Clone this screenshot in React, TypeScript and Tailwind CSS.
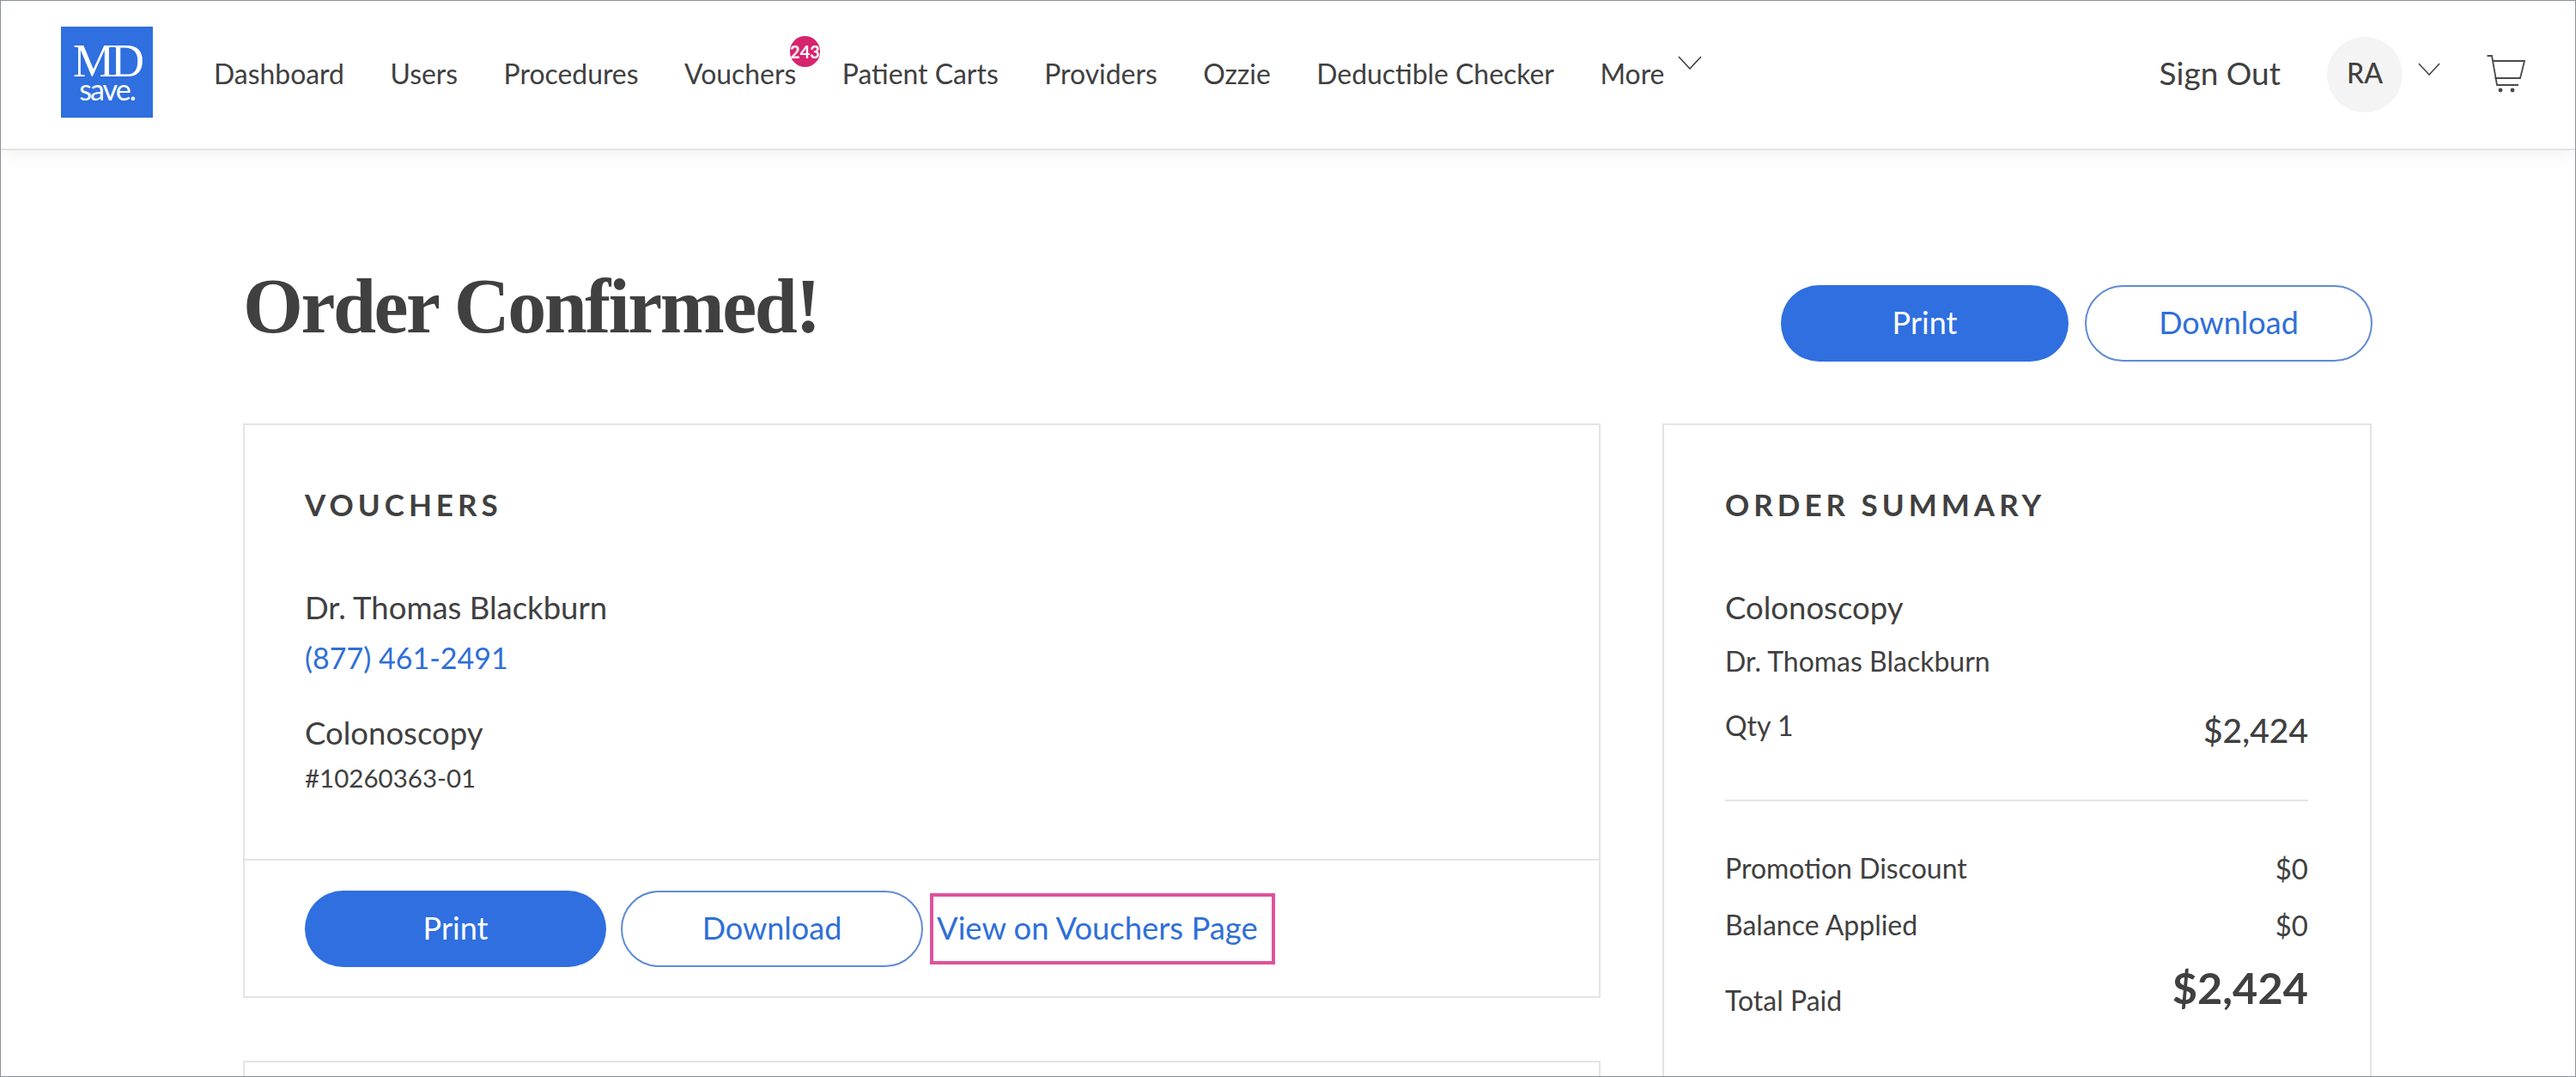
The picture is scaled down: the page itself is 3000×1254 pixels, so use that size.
const sans = 'font-["Lato","Noto_Sans",sans-serif]'

const navItems = ['Dashboard', 'Users', 'Procedures', 'Vouchers', 'Patient Carts', 'Providers', 'Ozzie', 'Deductible Checker', 'More']

function Chevron({ className }: { className: string }) {
  return (
    <svg viewBox="0 0 28 16" fill="none" stroke="#404040" strokeWidth="1.6" className={className}>
      <path d="M1 1l13 14L27 1" />
    </svg>
  )
}

function CartIcon() {
  return (
    <svg viewBox="0 0 45 46" fill="none" stroke="#4a4a4a" strokeWidth="1.8" className="h-[46px] w-[45px]">
      <path d="M0.5 1H6L12 35H37" />
      <path d="M6.5 7H44L39 27H9.5" />
      <circle cx="16" cy="41" r="2.4" fill="#4a4a4a" stroke="none" />
      <circle cx="30" cy="41" r="2.4" fill="#4a4a4a" stroke="none" />
    </svg>
  )
}

function Logo() {
  return (
    <div className="mb-[6px] flex h-[106px] w-[107px] flex-col items-center bg-[#2f6fe0] text-white">
      <span className='mt-[20px] font-["Liberation_Serif",serif] text-[54px] leading-[40px] tracking-[-4px]'>MD</span>
      <span className="text-[34px] leading-[26px] tracking-[-2px]">save.</span>
    </div>
  )
}

function Header() {
  return (
    <header className="flex h-[174px] items-center border-b-2 border-[#e4e4e4] bg-white pl-[70px] shadow-[0_6px_20px_rgba(0,0,0,0.05)]">
      <Logo />
      <nav className="mb-[3px] ml-[71px] flex items-center gap-[53.5px] text-[31.9px] leading-[40px] text-[#404040]">
        {navItems.map((item) => (
          <div key={item} className="relative flex items-center">
            <span>{item}</span>
            {item === 'Vouchers' && (
              <span className="absolute left-[123px] -top-[24px] flex h-[36px] w-[35px] items-center justify-center overflow-hidden rounded-full bg-[#d6246e] text-[20px] font-bold leading-none text-white">
                243
              </span>
            )}
            {item === 'More' && <Chevron className="absolute left-[91px] top-[-1px] h-[16px] w-[28px]" />}
          </div>
        ))}
      </nav>
      <div className="ml-auto flex items-center pr-[58px] text-[#404040]">
        <span className="mb-[5px] text-[37px] leading-[40px]">Sign Out</span>
        <div className="ml-[54px] flex h-[88px] w-[88px] items-center justify-center rounded-full bg-[#f4f4f4] pb-[4px] text-[32px] font-medium">
          RA
        </div>
        <Chevron className="-mt-[14px] ml-[18px] h-[15px] w-[26px]" />
        <div className="ml-[54px]">
          <CartIcon />
        </div>
      </div>
    </header>
  )
}

function Btn({ label, filled, w }: { label: string; filled?: boolean; w: string }) {
  const cls = filled ? 'bg-[#2f6fe0] text-white' : 'border-2 border-[#5f8bd6] bg-white text-[#2f6fd8]'
  return <div className={`flex h-[89px] items-center justify-center rounded-full pb-[3px] text-[36px] ${cls} ${w}`}>{label}</div>
}

function SectionTitle({ children }: { children: string }) {
  return <h2 className="text-[35px] font-bold leading-[40px] tracking-[5px] text-[#404040]">{children}</h2>
}

function VoucherCard() {
  return (
    <section className="border-2 border-[#e4e4e4]">
      <div className="px-[70px] pb-[74px] pt-[72px] text-[#404040]">
        <SectionTitle>VOUCHERS</SectionTitle>
        <p className="mt-[80px] text-[36.5px] leading-[40px]">Dr. Thomas Blackburn</p>
        <p className="mt-[19px] text-[34px] leading-[40px] text-[#2f6fd8]">(877) 461-2491</p>
        <p className="mt-[47px] text-[36.5px] leading-[40px]">Colonoscopy</p>
        <p className="mt-[13px] text-[29.5px] leading-[40px]">#10260363-01</p>
      </div>
      <div className="flex items-center border-t-2 border-[#e4e4e4] pb-[34px] pl-[70px] pt-[35px]">
        <Btn label="Print" filled w="w-[351px]" />
        <div className="ml-[17px]">
          <Btn label="Download" w="w-[352px]" />
        </div>
        <a className="ml-[8px] flex h-[83px] w-[402px] items-center border-[4px] border-[#e0529c] pb-[3px] pl-[4px] text-[36.4px] text-[#2f6fd8]">
          View on Vouchers Page
        </a>
      </div>
    </section>
  )
}

function SummaryRow({ label, value }: { label: string; value: string }) {
  return (
    <div className="flex justify-between text-[32px] leading-[40px] text-[#404040]">
      <span>{label}</span>
      <span className="text-[33px]">{value}</span>
    </div>
  )
}

function OrderSummary() {
  return (
    <aside className="h-[900px] border-2 border-[#e4e4e4] pl-[71px] pr-[72px] pt-[72px] text-[#404040]">
      <SectionTitle>ORDER SUMMARY</SectionTitle>
      <p className="mt-[80px] text-[36.5px] leading-[40px]">Colonoscopy</p>
      <p className="mt-[23px] text-[32px] leading-[40px]">Dr. Thomas Blackburn</p>
      <div className="mt-[35px] flex items-start justify-between">
        <span className="text-[32px] leading-[40px]">Qty 1</span>
        <span className="mt-[5px] text-[39px] font-medium leading-[40px]">$2,424</span>
      </div>
      <div className="mt-[61px] h-[2px] bg-[#e4e4e4]" />
      <div className="mt-[58px]">
        <SummaryRow label="Promotion Discount" value="$0" />
      </div>
      <div className="mt-[26px]">
        <SummaryRow label="Balance Applied" value="$0" />
      </div>
      <div className="mt-[28px] flex items-start justify-between">
        <span className="mt-[20px] text-[32px] leading-[40px]">Total Paid</span>
        <span className="text-[50.5px] font-bold leading-[50px]">$2,424</span>
      </div>
    </aside>
  )
}

export default function App() {
  return (
    <div className={`h-[1254px] w-[3000px] overflow-hidden border border-[#8a929c] bg-white ${sans}`}>
      <Header />
      <main className="w-[2762px] pl-[282px]">
        <div className="flex h-[318px] items-start justify-between">
          <h1 className='mt-[137px] font-["Liberation_Serif",serif] text-[90px] font-bold leading-[90px] tracking-[-2.5px] text-[#404040]'>
            Order Confirmed!
          </h1>
          <div className="mt-[157px] flex gap-[19px]">
            <Btn label="Print" filled w="w-[335px]" />
            <Btn label="Download" w="w-[335px]" />
          </div>
        </div>
        <div className="flex gap-[72px]">
          <div className="w-[1581px]">
            <VoucherCard />
            <section className="mt-[73px] h-[200px] border-2 border-[#e4e4e4]" />
          </div>
          <div className="w-[826px]">
            <OrderSummary />
          </div>
        </div>
      </main>
    </div>
  )
}
